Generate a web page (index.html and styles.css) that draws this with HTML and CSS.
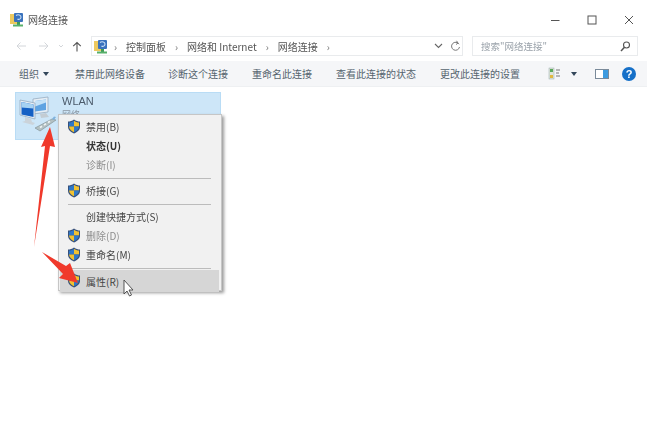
FILE: index.html
```html
<!DOCTYPE html>
<html lang="zh-CN">
<head>
<meta charset="utf-8">
<title>网络连接</title>
<link rel="stylesheet" href="styles.css">
</head>
<body>
<svg class="defs" width="0" height="0" aria-hidden="true">
  <defs>
    <symbol id="shield" viewBox="0 0 14 15">
      <path d="M7 .5C5 2 3 2.500 1 2.500V8c0 3 2.500 5 6 6.500 3.500-1.500 6-3.500 6-6.500V2.500C11 2.500 9 2 7 .5z" fill="#37507a"/>
      <path d="M7 1.700V7.500H2V3.500C4 3.400 5.500 3 7 1.700z" fill="#2f78c8"/>
      <path d="M7 1.700V7.500H12V3.500C10 3.400 8.500 3 7 1.700z" fill="#f2c230"/>
      <path d="M7 7.500V13.300C4.500 12.200 2.300 10.500 2 7.500z" fill="#f2c230"/>
      <path d="M7 7.500V13.300C9.500 12.200 11.700 10.500 12 7.500z" fill="#2f78c8"/>
    </symbol>
    <symbol id="netfolder" viewBox="0 0 14 15">
      <rect x="0" y="2" width="7" height="10" fill="#edc95f"/>
      <rect x="4" y="1" width="9" height="9" rx="1" fill="#3a72bd"/>
      <path d="M6 3.500c2-1.500 5-.5 5 1.500s-2 3-3.500 2" fill="none" stroke="#c9dff5" stroke-width="1.100"/>
      <rect x="7" y="10" width="3" height="3" fill="#3f9a58"/>
      <rect x="3" y="12.500" width="10" height="2" fill="#58b06a"/>
    </symbol>
  </defs>
</svg>

<div class="window">
  <header class="titlebar">
    <div class="title">
      <svg class="title-icon"><use href="#netfolder"/></svg>
      <span>网络连接</span>
    </div>
    <div class="winctl">
      <svg width="10" height="10" viewBox="0 0 10 10"><path d="M1 5.500H9.500" stroke="#555" stroke-width="1"/></svg>
      <svg width="10" height="10" viewBox="0 0 10 10"><rect x="1" y="1" width="8" height="8" fill="none" stroke="#555" stroke-width="1"/></svg>
      <svg width="10" height="10" viewBox="0 0 10 10"><path d="M1 1L9 9M9 1L1 9" stroke="#555" stroke-width="1"/></svg>
    </div>
  </header>

  <nav class="navbar">
    <div class="arrows">
      <svg width="12" height="10" viewBox="0 0 12 10"><path d="M11 5H2M5.500 1.500L2 5l3.500 3.500" fill="none" stroke="#d3d6da" stroke-width="1"/></svg>
      <svg width="12" height="10" viewBox="0 0 12 10"><path d="M1 5H10M6.500 1.500L10 5 6.500 8.500" fill="none" stroke="#d3d6da" stroke-width="1"/></svg>
      <svg class="chev" width="6" height="4" viewBox="0 0 6 4"><path d="M1 1l2 2 2-2" fill="none" stroke="#d3d6da"/></svg>
      <svg width="10" height="11" viewBox="0 0 10 11"><path d="M5 10.500V1.500M1.200 5.200L5 1.500l3.800 3.700" fill="none" stroke="#555" stroke-width="1.100"/></svg>
    </div>
    <div class="address">
      <svg class="addr-icon"><use href="#netfolder"/></svg>
      <span class="sep">›</span><span>控制面板</span>
      <span class="sep">›</span><span>网络和 Internet</span>
      <span class="sep">›</span><span>网络连接</span>
      <span class="sep">›</span>
      <svg class="addr-chev" width="9" height="6" viewBox="0 0 9 6"><path d="M1 1l3.500 3.500L8 1" fill="none" stroke="#666" stroke-width="1.100"/></svg>
      <svg class="addr-refresh" width="11" height="12" viewBox="0 0 11 12"><path d="M9 4.200A4 4 0 1 0 9.500 7M6.500 .8L8 3 6 4.500" fill="none" stroke="#777" stroke-width="1"/></svg>
    </div>
    <div class="search">
      <span>搜索"网络连接"</span>
      <svg width="11" height="11" viewBox="0 0 11 11"><circle cx="6.500" cy="4" r="3" fill="none" stroke="#555" stroke-width="1.100"/><path d="M4.500 6.200L1 10" stroke="#555" stroke-width="1.500"/></svg>
    </div>
  </nav>

  <div class="toolbar">
    <span class="tool tool-org">组织<i class="caret"></i></span>
    <span class="tool tool-a">禁用此网络设备</span>
    <span class="tool tool-b">诊断这个连接</span>
    <span class="tool tool-c">重命名此连接</span>
    <span class="tool tool-d">查看此连接的状态</span>
    <span class="tool">更改此连接的设置</span>
    <div class="tool-right">
      <svg width="13" height="13" viewBox="0 0 13 13"><rect x="1" y="1" width="5" height="11" fill="#dfe6da" stroke="#9aa" stroke-width=".5"/><rect x="2" y="2" width="3" height="3" fill="#5aa85a"/><rect x="2" y="8" width="3" height="3" fill="#e0b840"/><path d="M8 3h4M8 6h3M8 9h4" stroke="#777"/></svg>
      <i class="caret"></i>
      <svg class="pane-ico" width="14" height="10" viewBox="0 0 14 10"><rect x=".5" y=".5" width="13" height="9" fill="#fff" stroke="#7a8a9a"/><rect x="8" y="1" width="5" height="8" fill="#3d9be0"/></svg>
      <span class="help">?</span>
    </div>
  </div>

  <main class="content">
    <div class="conn">
      <svg class="conn-icon" width="44" height="46" viewBox="0 0 44 46">
        <path d="M17 6l15-2v15l-15 2z" fill="#e6eef5" stroke="#8fa5ba" stroke-width=".7"/>
        <path d="M19 8l11-1.500v10.500l-11 1.500z" fill="#5fa3e2"/>
        <path d="M19 8l11-1.500v3l-11 4z" fill="#c4e2f8"/>
        <path d="M24 21l6-1 3 4-8 1z" fill="#c3ccd3"/>
        <path d="M4 7l15 3v16L4 22z" fill="#e6eef5" stroke="#8fa5ba" stroke-width=".7"/>
        <path d="M5.500 9l12 2.500v12.500l-12-2.500z" fill="#1560c4"/>
        <path d="M5.500 9l12 2.500v4l-12-1z" fill="#a6d2f3"/>
        <path d="M9 24l6 2 1 3 3 1-2 2L6 29l3-1z" fill="#cbd3da"/>
        <path d="M19 35l17-9 4 1-16 11z" fill="#b3c0c2" stroke="#7c8c8e" stroke-width=".6"/>
        <path d="M24 34.500l2-1.200M28 32l2-1.200M32 29.500l2-1.200" stroke="#eef4f4" stroke-width="1.600"/>
        <path d="M36 26l2-2.500 2 .5-2 3z" fill="#7fb2dd"/>
      </svg>
      <div class="conn-text">
        <div class="conn-name">WLAN</div>
        <div class="conn-status">网络</div>
      </div>
    </div>
  </main>
</div>

<ul class="menu">
  <li class="mi"><svg class="shield"><use href="#shield"/></svg>禁用(B)</li>
  <li class="mi bold">状态(U)</li>
  <li class="mi muted">诊断(I)</li>
  <li class="rule"></li>
  <li class="mi"><svg class="shield"><use href="#shield"/></svg>桥接(G)</li>
  <li class="rule"></li>
  <li class="mi">创建快捷方式(S)</li>
  <li class="mi muted"><svg class="shield"><use href="#shield"/></svg>删除(D)</li>
  <li class="mi"><svg class="shield"><use href="#shield"/></svg>重命名(M)</li>
  <li class="rule"></li>
  <li class="mi active"><svg class="shield"><use href="#shield"/></svg>属性(R)</li>
</ul>

<svg class="overlay" width="647" height="422" viewBox="0 0 647 422" aria-hidden="true">
  <path d="M34 247L45 146l-4 1 9-20 5 20-5-1z" fill="#f0392b"/>
  <path d="M42 252L66 266l4-3 8 20-19-5 4-4z" fill="#f0392b"/>
  <path d="M124 280V294l3-3 2.500 5 2-1-2.500-5h4z" fill="#fff" stroke="#444" stroke-width=".9"/>
</svg>
</body>
</html>
```
FILE: styles.css
```css
* { box-sizing: border-box; }
html, body { margin: 0; padding: 0; background: #fff; }
body {
  width: 647px;
  height: 422px;
  overflow: hidden;
  position: relative;
  font-family: "Noto Sans CJK SC", "Liberation Sans", sans-serif;
  font-size: 10px;
  color: #4a5560;
}
.defs { position: absolute; }
.window { display: flex; flex-direction: column; height: 422px; filter: blur(.5px); }

.titlebar { height: 36px; display: flex; justify-content: space-between; align-items: center; padding: 3px 13px 0 10px; }
.title { display: flex; align-items: center; gap: 4px; font-size: 10px; color: #555; }
.title-icon { width: 14px; height: 15px; }
.winctl { display: flex; gap: 27px; }

.navbar { height: 20px; display: flex; align-items: center; padding-left: 15px; }
.arrows { display: flex; align-items: center; gap: 11px; width: 76px; }
.arrows .chev { margin: 0 -3px; }
.address { width: 372px; height: 20px; border: 1px solid #e9ebed; display: flex; align-items: center; gap: 9px; padding: 0 1px 0 2px; color: #555; font-size: 10px; }
.addr-icon { width: 14px; height: 15px; margin-right: -3px; }
.sep { color: #777; font-size: 10px; }
.addr-chev { margin-left: auto; }
.addr-refresh { margin-left: -2px; }
.search { width: 166px; height: 20px; margin-left: 9px; border: 1px solid #e9ebed; display: flex; align-items: center; justify-content: space-between; padding: 0 6px 0 8px; color: #9aa2aa; font-size: 9.500px; }

.toolbar { height: 26px; margin-top: 5px; background: #f5f6f8; border-bottom: 1px solid #eef0f2; display: flex; align-items: center; padding-left: 19px; }
.tool { white-space: nowrap; color: #56646f; margin-right: 25px; }
.tool-org { display: flex; align-items: center; gap: 4px; margin-right: 26px; }
.tool-a { margin-right: 23px; }
.tool-b, .tool-c { margin-right: 24px; }
.tool-d { margin-right: 24px; }
.caret { width: 0; height: 0; border-left: 3.500px solid transparent; border-right: 3.500px solid transparent; border-top: 4px solid #33475a; display: inline-block; }
.tool-right { margin-left: auto; display: flex; align-items: center; gap: 10px; padding-right: 11px; }
.pane-ico { margin-left: 8px; }
.help { width: 14px; height: 14px; margin-left: 3px; border-radius: 50%; background: #1670c8; color: #fff; font: bold 11px/14px "Liberation Sans", sans-serif; text-align: center; }

.content { flex: 1; padding: 5px 0 0 15px; }
.conn { width: 206px; height: 48px; background: #cde6f8; border: 1px solid #b9dcf5; display: flex; gap: 2px; }
.conn-icon { flex: none; }
.conn-text { padding-top: 2px; }
.conn-name { font-size: 11px; line-height: 13px; color: #4b5a6a; font-family: "Liberation Sans", sans-serif; }
.conn-status { font-size: 9px; line-height: 13px; color: #8b97a3; }

.menu { position: absolute; left: 58px; top: 114px; width: 164px; height: 177px; margin: 0; padding: 2px 2px 0 1px; list-style: none; background: #f1f1f1; border: 1px solid #c6c6c6; box-shadow: 2px 2px 3px rgba(0,0,0,.4); filter: blur(.4px); }
.mi { height: 19px; display: flex; align-items: center; padding-left: 26px; position: relative; color: #444; font-size: 10px; }
.bold { font-weight: 700; color: #333; }
.muted { color: #8d8d8d; }
.active { background: #d6d6d6; height: 22px; margin-top: -1px; }
.rule { height: 1px; background: #bcbcbc; margin: 4px 8px 2px 8px; }
.shield { position: absolute; left: 7px; top: 2px; width: 14px; height: 15px; }
.active .shield { top: 3px; }

.overlay { position: absolute; left: 0; top: 0; filter: blur(.3px); }
```
